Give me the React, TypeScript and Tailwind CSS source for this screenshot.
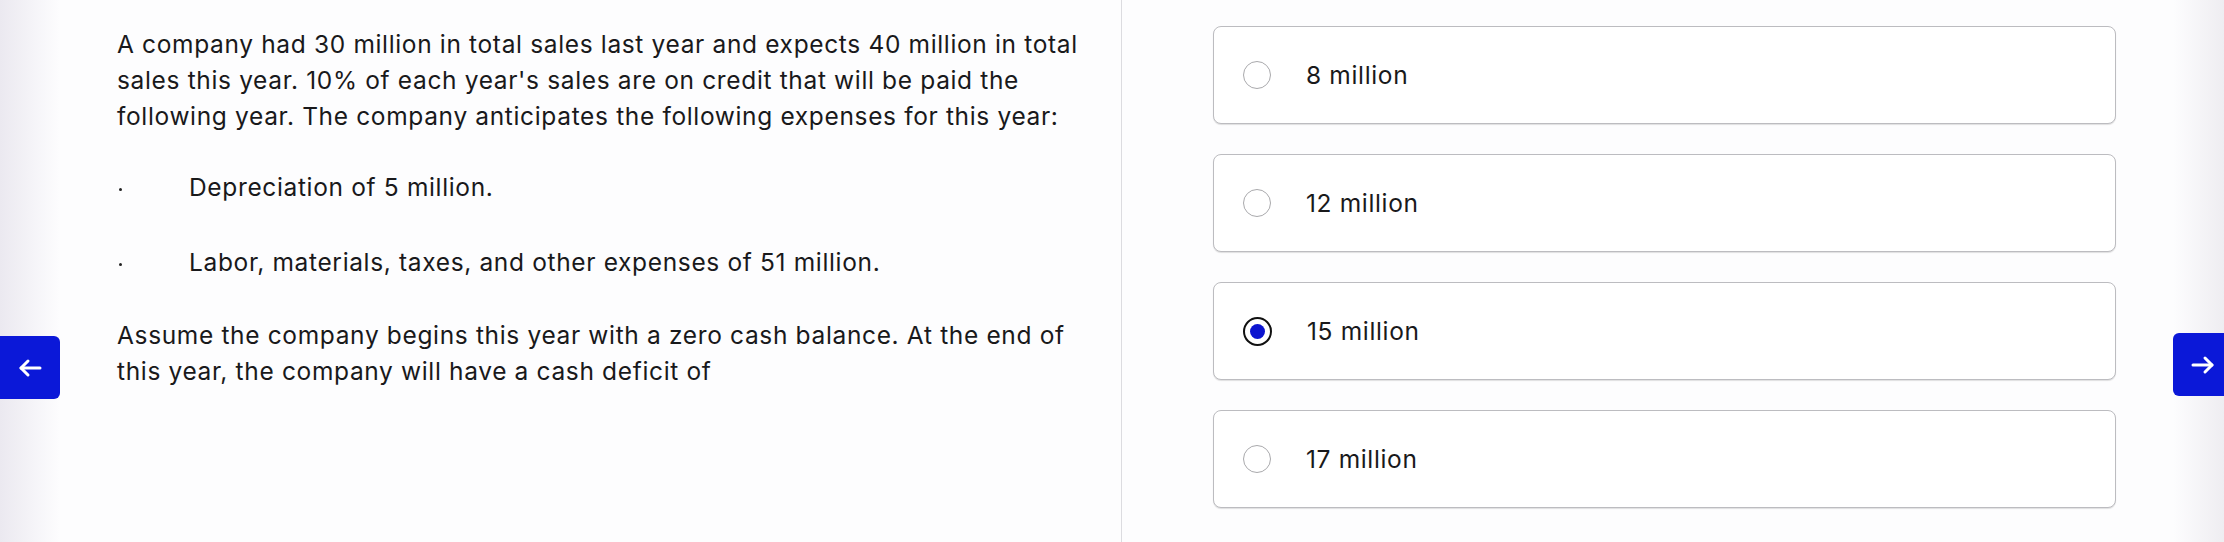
import React from 'react';

const options = [
  { id: 'a', label: '8 million' },
  { id: 'b', label: '12 million' },
  { id: 'c', label: '15 million' },
  { id: 'd', label: '17 million' },
];

const ArrowIcon: React.FC<{ dir: 'left' | 'right' }> = ({ dir }) => (
  <svg
    width="24"
    height="20"
    viewBox="0 0 24 20"
    fill="none"
    stroke="white"
    strokeWidth="3"
    strokeLinecap="round"
    strokeLinejoin="round"
    className={dir === 'right' ? 'rotate-180' : ''}
  >
    <path d="M22 10H3" />
    <path d="M10 3L3 10l7 7" />
  </svg>
);

const App: React.FC = () => {
  const selected = 'c';

  return (
    <div
      className="flex w-full h-[542px] overflow-hidden bg-[#fdfdfe] text-[#19191b]"
      style={{ fontFamily: 'Inter, "Liberation Sans", Arial, sans-serif' }}
    >
      {/* Previous button */}
      <div className="w-[60px] shrink-0 bg-gradient-to-r from-[#ebe9f0] to-[#fdfdfe]">
        <button className="mt-[336px] w-[60px] h-[63px] bg-[#0b18d8] rounded-r-md flex items-center justify-center">
          <ArrowIcon dir="left" />
        </button>
      </div>

      {/* Question */}
      <div className="w-[1061px] shrink-0 pl-[57px] pt-[26px] text-[24.5px] leading-[36px] tracking-[0.65px]">
        <p className="whitespace-nowrap">
          A company had 30 million in total sales last year and expects 40 million in total
          <br />
          sales this year. 10% of each year's sales are on credit that will be paid the
          <br />
          following year. The company anticipates the following expenses for this year:
        </p>
        <ul className="mt-[35px]">
          <li className="flex items-center">
            <span className="w-[72px] shrink-0">
              <span className="block ml-[2px] mt-[4px] w-[3px] h-[3px] rounded-full bg-[#222]" />
            </span>
            Depreciation of 5 million.
          </li>
          <li className="flex items-center mt-[39px]">
            <span className="w-[72px] shrink-0">
              <span className="block ml-[2px] mt-[4px] w-[3px] h-[3px] rounded-full bg-[#222]" />
            </span>
            Labor, materials, taxes, and other expenses of 51 million.
          </li>
        </ul>
        <p className="mt-[37px] whitespace-nowrap">
          Assume the company begins this year with a zero cash balance. At the end of
          <br />
          this year, the company will have a cash deficit of
        </p>
      </div>

      {/* Divider */}
      <div className="w-px shrink-0 bg-[#dcdce0]" />

      {/* Answers */}
      <div className="flex-1 pl-[91px] pr-[57px] pt-[26px] flex flex-col gap-[30px]">
        {options.map((opt) => {
          const isSelected = opt.id === selected;
          return (
            <div
              key={opt.id}
              className="h-[98px] bg-white border border-[#bcbcc0] rounded-lg shadow-[0_1px_1px_rgba(0,0,0,0.12)] flex items-center pl-[29px]"
            >
              {isSelected ? (
                <span className="w-[29px] h-[29px] rounded-full border-2 border-[#111] bg-white flex items-center justify-center shrink-0">
                  <span className="w-[15px] h-[15px] rounded-full bg-[#0c14cf]" />
                </span>
              ) : (
                <span className="w-[28px] h-[28px] rounded-full border-[1.5px] border-[#a9a9ac] bg-white shrink-0" />
              )}
              <span className="ml-[35px] text-[24.5px] leading-none tracking-[0.65px]">{opt.label}</span>
            </div>
          );
        })}
      </div>

      {/* Next button */}
      <div className="w-[51px] shrink-0 bg-gradient-to-r from-[#fdfdfe] to-[#eeedf1]">
        <button className="mt-[333px] w-[51px] h-[63px] bg-[#0b18d8] rounded-l-md flex items-center justify-center pl-[8px]">
          <ArrowIcon dir="right" />
        </button>
      </div>
    </div>
  );
};

export default App;
